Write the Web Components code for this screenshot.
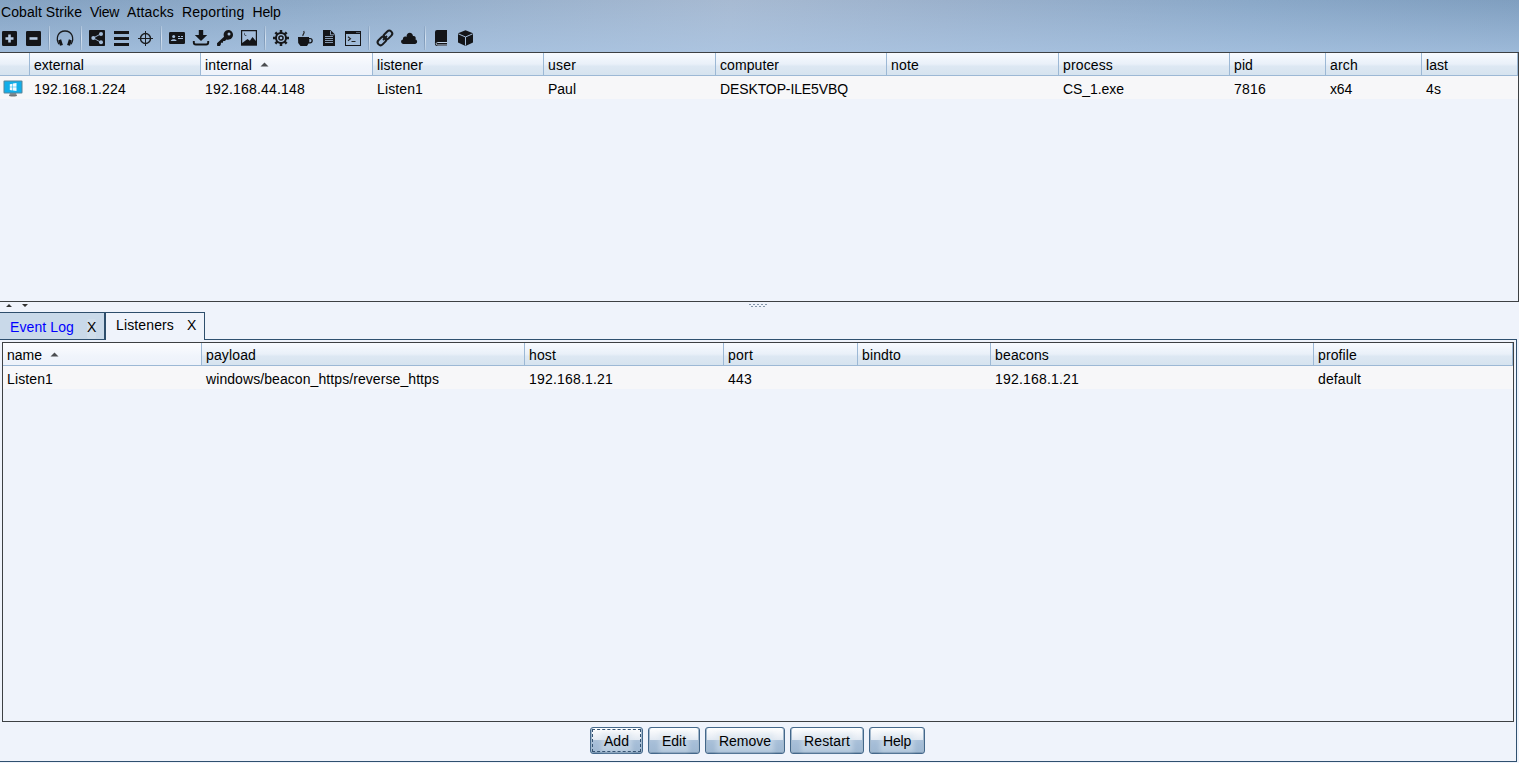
<!DOCTYPE html>
<html lang="en">
<head>
<meta charset="utf-8">
<title>Cobalt Strike</title>
<style>
html,body{margin:0;height:100%;overflow:hidden;background:#eff3fb}
body{font:14px "Liberation Sans",Arial,sans-serif;color:#000}
</style>
</head>
<body>
<cs-app></cs-app>
<script>
const define = (name, css, render, after) => customElements.define(name, class extends HTMLElement {
  connectedCallback() {
    if (this.shadowRoot) return;
    const t = document.createElement('template');
    t.innerHTML = '<style>*{box-sizing:border-box}' + css + '</style>' + render(this);
    this.attachShadow({mode: 'open'}).append(t.content.cloneNode(true));
    if (after) after(this);
  }
});
const attr = (e, n) => e.getAttribute(n);

// Text run whose advance is fitted to a given width in pixels.
define('cs-text', ':host{display:inline-block;white-space:nowrap;line-height:16px}', () => '<span><slot></slot></span>', e => {
  const w = +attr(e, 'w');
  if (!w) return;
  const s = e.shadowRoot.querySelector('span'), n = e.textContent.length;
  const d = w - s.getBoundingClientRect().width;
  s.style.letterSpacing = (d / n).toFixed(3) + 'px';
});
const T = (s, w) => s ? `<cs-text w="${w}">${s}</cs-text>` : '';

// 16x16 toolbar glyphs; "b" stands for the bar colour showing through.
const b = '#a3bcd9';
const ICONS = {
  plus: `<rect x="1" y="1" width="15" height="15" rx="1.3"/><path d="M8.500 4.500v8M4.500 8.500h8" stroke="#b4c9e2" stroke-width="2.600"/>`,
  minus: `<rect x="1" y="1" width="15" height="15" rx="1.3"/><path d="M4.500 8.500h8" stroke="#b4c9e2" stroke-width="2.600"/>`,
  headphones: '<path d="M1.9 14.2C-1.6 8 1 1 8 1s9.600 7 6.100 13.200" fill="none" stroke="#1a1c1f" stroke-width="1.3"/><path d="M1.200 10.600l2.900-1.400 1.800 5.700-2.900.9zM14.800 10.600l-2.900-1.400-1.800 5.700 2.900.9z"/>',
  share: `<rect x="0" y="0" width="16" height="16" rx=".8"/><path d="M12.300 3.600L4.300 8l8 4.500" stroke="${b}" stroke-width=".9" fill="none"/><g fill="${b}"><circle cx="4.300" cy="8" r="2"/><circle cx="12" cy="3.900" r="2"/><circle cx="12" cy="12.200" r="2"/></g>`,
  list: '<path d="M1 1h15v3H1zM1 7h15v3H1zM1 13h15v3H1z"/>',
  target: '<circle cx="8.500" cy="8.500" r="5" fill="none" stroke="#1a1c1f" stroke-width="1.400"/><path d="M8.500 1v15M1 8.500h15" stroke="#1a1c1f" stroke-width="1"/>',
  card: `<rect x="0" y="2" width="16" height="12" rx="1.300"/><g fill="${b}"><circle cx="4.700" cy="6.500" r="1.500"/><path d="M1.800 11c.2-2.500 5.600-2.500 5.800 0zM9 6h2v1H9zM12 6h2v1h-2zM9 8h5v1H9z"/></g>`,
  download: '<path d="M5.800 0h4.400v5h4L8 11 1.800 5h4z"/><path d="M.8 11v1.500q0 2 2 2h10.400q2 0 2-2V11" fill="none" stroke="#131416" stroke-width="1.900"/>',
  key: `<path d="M0 13.200l7-6.500C5.800 3 8.200 0 11.300 0 14 0 16 2.200 16 4.800c0 3.400-3.100 5.700-6.600 4.700L8 11H6.200l-.3 1.800H4L3.700 15l-1 1H.2z"/><circle cx="12" cy="4" r="1.500" fill="${b}"/>`,
  image: `<rect x="0" y="0" width="16" height="15.700"/><path d="M1.200 1.200h13.600v9.800L11.500 7 8.900 10.700 6.500 9l-5.300 4z" fill="${b}"/><path d="M4 2.500a1.800 1.800 0 1 0 2 3A2 2 0 0 1 4 2.500z"/>`,
  gear: `<path d="M8 0v16M0 8h16M2.350 2.350l11.300 11.300M13.650 2.350L2.350 13.650" stroke="#1a1c1f" stroke-width="2.500"/><circle cx="8" cy="8" r="6"/><circle cx="8" cy="8" r="4" fill="${b}"/><circle cx="8" cy="8" r="2.800"/><circle cx="8" cy="8" r="1.300" fill="${b}"/>`,
  coffee: '<path d="M1 7h11v1h1c3.800 0 3.800 5.500 0 5.500h-1.500L10 16H3.500L1.200 13zM12.300 9v3.200h.8c1.800 0 1.800-3.200 0-3.200z" fill-rule="evenodd"/><path d="M6 6c-1-1.700 2.500-2.200.7-5" fill="none" stroke="#222" stroke-width="1.200"/>',
  file: `<path d="M2 0h7.500L14 4.500V16H2z"/><path d="M9.500.8v4h4" stroke="${b}" stroke-width=".8" fill="none"/><path d="M4 6.500h8M4 8.500h8M4 10.500h8M4 12.500h8" stroke="${b}" stroke-width=".8"/>`,
  terminal: '<path d="M0 1h16v15H0zM1 4v11h14V4z" fill-rule="evenodd"/><path d="M3 6.800l2.500 2L3 10.800M6.500 11.500h4" fill="none" stroke="#222" stroke-width="1.100"/><path d="M11.500 2.500h1M13.500 2.500h1" stroke="#9ab5d2"/>',
  link: '<g transform="rotate(-45 8 8)" fill="none" stroke="#1a1c1f" stroke-width="2"><rect x="-1" y="5" width="9.500" height="5.800" rx="2.800"/><rect x="7.500" y="5" width="9.500" height="5.800" rx="2.800"/></g><path d="M6 10l4-4" stroke="#1a1c1f" stroke-width="1.800"/>',
  cloud: '<path d="M2.500 14C-.5 14-.8 10 2 9.600 1.600 6.800 4 5.800 5.500 7 5.400 2 11.200 1.300 12 6c2.400-.3 3.200 1.600 2.500 3.600C17 10.200 16.500 14 14 14z"/>',
  book: `<path d="M4 0h10v16H4c-2.500 0-2-3-2-5V2q0-2 2-2z"/><path d="M14 12.500H4.700c-2 0-2 2.500 0 2.500H14" fill="none" stroke="#c2d3e7" stroke-width="1"/>`,
  cube: `<path d="M8.500 .3l7.500 3v9.200L8.500 16 1 12.500V3.300z"/><path d="M1.300 3.800L8.500 7l7.200-3.200M8.500 7v8.500" fill="none" stroke="${b}" stroke-width="1"/>`
};
define('cs-icon', ':host{display:flex;width:24px;height:24px;align-items:center;justify-content:center}svg{width:16px;height:16px;overflow:visible;fill:#141518}',
  e => `<svg viewBox="0 0 16 16">${ICONS[attr(e, 'name')]}</svg>`);

define('cs-sep', ':host{display:flex;width:8px;height:24px;padding-left:3px}i{width:1px;background:linear-gradient(#93adca,#7c98b8,#93adca)}i+i{background:linear-gradient(#a9c0d9,#d5e2f0,#b5c9de)}', () => '<i></i><i></i>');

define('cs-menubar', ':host{display:flex;height:24px;padding:4px 0 0 1px;gap:8px}', () =>
  T('Cobalt Strike', 81) + T('View', 29) + T('Attacks', 47) + T('Reporting', 62.5) + T('Help', 28));

define('cs-toolbar', ':host{display:flex;height:28px;padding:2px 0 0 0;margin-left:-3px}', () =>
  'plus minus | headphones | share list target | card download key image | gear coffee file terminal | link cloud | book cube'
    .split(' ').map(n => n === '|' ? '<cs-sep></cs-sep>' : `<cs-icon name="${n}"></cs-icon>`).join(''));

const ARROW = '<svg class="sort" width="9" height="5" viewBox="0 0 9 5"><path d="M.5 4.500L4.500.5l4 4z" fill="#4a4c50"/></svg>';
const MONITOR = '<svg class="pc" width="20" height="17" viewBox="0 0 20 17"><path d="M7 13h6l.8 2.500H6.200z" fill="#8d9294"/><ellipse cx="10" cy="15.600" rx="4" ry="1" fill="#71777a"/><rect x=".5" y=".5" width="19" height="13" rx="1" fill="#5a8496"/><rect x="1.500" y="1.500" width="17" height="11" fill="#12aee9"/><path d="M6.800 4.200l2.700-.5v3.100H6.800zM10 3.600l3.500-.6v3.800H10zM6.800 7.300h2.700v3.100l-2.700-.5zM10 7.300h3.500v3.800l-3.500-.6z" fill="#f3fbff"/></svg>';
// Column tuples: width, heading, heading width, value, value width, sorted.
const TABLES = {
  sessions: [[30, '', 0, MONITOR, 0], [171, 'external', 50, '192.168.1.224', 92], [172, 'internal', 47, '192.168.44.148', 100, 1], [171, 'listener', 46, 'Listen1', 46], [172, 'user', 28, 'Paul', 28], [171, 'computer', 59, 'DESKTOP-ILE5VBQ', 128], [172, 'note', 28, '', 0], [171, 'process', 50, 'CS_1.exe', 61], [96, 'pid', 19, '7816', 32], [96, 'arch', 28, 'x64', 22], [96, 'last', 22, '4s', 15]],
  listeners: [[199, 'name', 35, 'Listen1', 46, 1], [323, 'payload', 50, 'windows/beacon_https/reverse_https', 233], [199, 'host', 27, '192.168.1.21', 84], [134, 'port', 25, '443', 24], [133, 'bindto', 39, '', 0], [323, 'beacons', 54, '192.168.1.21', 84], [199, 'profile', 39, 'default', 43]]
};
define('cs-table', `
:host{display:block;border:1px solid #3d4043;background:#eff3fb;overflow:hidden}
.r{display:flex}
.r>div{flex:none;padding:4px 0 0 4px;height:23px;display:flex;align-items:flex-start}
.h>div{border-right:1px solid #9cb8d5;border-bottom:1px solid #9cb8d5;background:linear-gradient(#f8fbff 0%,#e9f0f9 50%,#dde8f3 60%,#d6e3ef 100%)}
.h>.s{background:linear-gradient(#fcfdff,#f0f4fb 60%,#edf2fa)}
.v{background:#f7f7f9;height:23px}.v>div{padding-top:5px}
.sort{margin:5px 0 0 8px}.pc{margin:-1px 0 0 -1px}`, e => {
  const c = TABLES[attr(e, 'data')];
  return '<div class="r h">' + c.map(k => `<div class="${k[5] ? 's' : ''}" style="width:${k[0]}px">${T(k[1], k[2])}${k[5] ? ARROW : ''}</div>`).join('') + '</div>' +
    '<div class="r v">' + c.map(k => `<div style="width:${k[0]}px">${k[3] === MONITOR ? MONITOR : T(k[3], k[4])}</div>`).join('') + '</div>';
});

define('cs-divider', ':host{display:flex;height:10px;padding:1px 0 0 6px}svg{flex:none;display:block}.d{margin-left:720px}', () => {
  let d = '';
  for (let i = 0; i < 5; i++) d += `<path d="M${i * 4} 1.500h2${i < 4 ? `M${i * 4 + 2} 3.500h2` : ''}" stroke="#8294a8"/>`;
  return `<svg width="23" height="6"><path d="M0 4L3 1l3 3zM16 1h6l-3 3z" fill="#333"/></svg><svg class="d" width="20" height="6">${d}</svg>`;
});

define('cs-tab', `
:host{display:flex;height:27px;border:1px solid #2e4e6c;border-bottom:0;background:#c9d9e9;color:#00f;padding:6px 8px 0 10px;justify-content:space-between}
:host([active]){height:28px;background:#eff3fb;color:#000;padding-top:4px;position:relative}
.x{color:#000;border-radius:2px;background:#d0deeb}:host([active]) .x{background:none}`, () => '<slot></slot><cs-text class="x" w="9">X</cs-text>');

define('cs-button', `
:host{display:flex;height:27px;border:1px solid #43678a;border-radius:3px;justify-content:center;padding-top:5px;background:linear-gradient(#fff 0%,#e2e9f2 48%,#abc1d9 50%,#a5bdd7 65%,#9fb8d1 100%);box-shadow:inset 1px 0 0 #a3b8cc,inset -1px 0 0 #a3b8cc,inset 0 -1px 0 #7e99b4;position:relative;isolation:isolate}
cs-text{position:relative}
cs-text::before{content:"";position:absolute;inset:0 -3px 1px;z-index:-1;background:#d7e3ee;opacity:.5;filter:blur(2px)}
:host([focused])::after{content:"";position:absolute;inset:1px;border:1px dashed #355372}`, e => T(attr(e, 'label'), attr(e, 'w')));

define('cs-app', `
:host{display:flex;flex-direction:column;height:763px;width:1519px;background:#eff3fb}
header{height:52px;flex:none;background:linear-gradient(rgba(175,202,232,0),rgba(175,202,232,.62)),linear-gradient(97deg,#83a1c1 0%,#8eaac8 20%,#a7bad2 48%,#9bb1cc 62%,#8aa8c8 82%,#7f9ebf 100%)}
.top{height:250px;flex:none}
.tabs{display:flex;height:27px;align-items:flex-start;flex:none}
.a{width:106px;margin-left:-1px}.b{width:100px}
.panel{height:423px;width:1517px;flex:none;border:1px solid #2f506f;border-left:0;padding:2px 2px 0 2px}
.low{height:380px;width:1512px}
.btns{display:flex;gap:5px;padding:5px 0 0 588px}
cs-button{flex:none}`, () => `
<header><cs-menubar></cs-menubar><cs-toolbar></cs-toolbar></header>
<cs-table class="top" data="sessions" style="border-left:0"></cs-table>
<cs-divider></cs-divider>
<div class="tabs"><cs-tab class="a">${T('Event Log', 64)}</cs-tab><cs-tab class="b" active>${T('Listeners', 58)}</cs-tab></div>
<div class="panel"><cs-table class="low" data="listeners"></cs-table>
<div class="btns">
<cs-button focused label="Add" w="25" style="width:53px"></cs-button>
<cs-button label="Edit" w="24" style="width:52px"></cs-button>
<cs-button label="Remove" w="52" style="width:80px"></cs-button>
<cs-button label="Restart" w="46" style="width:74px"></cs-button>
<cs-button label="Help" w="28" style="width:56px"></cs-button>
</div></div>`);
</script>
</body>
</html>
